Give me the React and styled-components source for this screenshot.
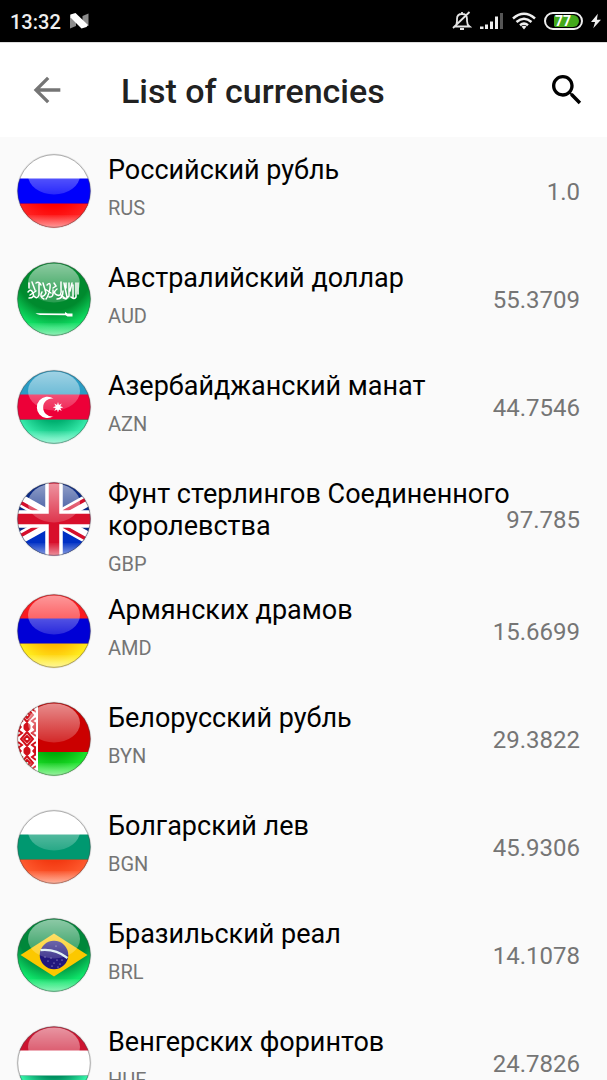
import React, { useId } from "react";
import styled, { createGlobalStyle } from "styled-components";

const GlobalStyle = createGlobalStyle`
  * { box-sizing: border-box; }
  html, body { margin: 0; background: #fafafa; }
  body, button { font-family: Roboto, "Liberation Sans", sans-serif; }
`;

const Screen = styled.div`
  display: flex;
  flex-direction: column;
  height: 100vh;
  overflow: hidden;
  background: #fafafa;
`;

const StatusBar = styled.div`
  flex: none;
  display: flex;
  align-items: center;
  justify-content: space-between;
  height: 42px;
  padding: 0 6px 0 10px;
  background: #000;
  color: #eee;
`;

const StatusGroup = styled.div`
  display: flex;
  align-items: center;
  gap: ${(p) => p.$gap}px;

  svg { display: block; flex: none; }
`;

const Clock = styled.time`
  font-size: 20px;
  line-height: 24px;
  font-weight: 500;
  padding-top: 2px;
`;

const Battery = styled.div`
  display: flex;
  width: 39px;
  height: 18px;
  padding: 1px;
  border: 2px solid #eee;
  border-radius: 9px;
`;

const BatteryLevel = styled.div`
  width: 25px;
  margin-left: auto;
  margin-right: 1px;
  border-radius: 2px 7px 7px 2px;
  background: #43a91c;
  color: #fff;
  font-size: 14px;
  line-height: 12px;
  font-weight: 700;
  padding-left: 1px;
`;

const Header = styled.header`
  flex: none;
  display: flex;
  align-items: center;
  height: 95px;
  padding: 0 20px 0 27px;
  border-top: 1px solid #ddd;
  background: #fff;
`;

const IconButton = styled.button`
  flex: none;
  width: 40px;
  height: 40px;
  padding: 0;
  border: 0;
  background: none;
  color: ${(p) => p.$color};
  cursor: pointer;

  svg { display: block; fill: currentColor; }
`;

const Title = styled.h1`
  flex: 1;
  margin: 0 16px 0 54px;
  padding-top: 2px;
  color: #212121;
  font-size: 34px;
  line-height: 40px;
  font-weight: 500;
`;

const List = styled.ul`
  flex: 1;
  min-height: 0;
  margin: 0;
  padding: 0;
  list-style: none;
  overflow-y: auto;
  scrollbar-width: none;
`;

const Row = styled.li`
  display: flex;
  align-items: center;
  min-height: 108px;
  padding: 0 27px 0 16px;
`;

const FlagImage = styled.svg`
  flex: none;
  display: block;
  width: 76px;
  height: 76px;
`;

const Info = styled.div`
  flex: 1;
  align-self: flex-start;
  min-width: 0;
  margin: 0 -8px 0 16px;
  padding-top: 17px;
`;

const Name = styled.div`
  color: #000;
  font-size: 27px;
  line-height: 32px;
`;

const Code = styled.div`
  margin-top: 10px;
  color: #757575;
  font-size: 20px;
  line-height: 25px;
`;

const Rate = styled.div`
  flex: none;
  padding-top: 2px;
  color: #757575;
  font-size: 24px;
  line-height: 28px;
`;

function Stripes({ colors }) {
  return (
    <>
      <rect width="76" height="26" fill={colors[0]} />
      <rect y="25.500" width="76" height="25.500" fill={colors[1]} />
      <rect y="50.500" width="76" height="26" fill={colors[2]} />
    </>
  );
}

const starPoints = (cx, cy, outer, inner, n) =>
  Array.from({ length: n * 2 }, (_, i) => {
    const r = i % 2 ? inner : outer;
    const a = (Math.PI * i) / n;
    return `${(cx + r * Math.sin(a)).toFixed(2)},${(cy - r * Math.cos(a)).toFixed(2)}`;
  }).join(" ");

const ornament = "M-3 -11L0 -8L3 -11M0 -7L6 0L0 7L-6 0ZM0 -3L3 0L0 3L-3 0ZM-3 11L0 8L3 11M-9 -9L-5 -6L-9 -3M-9 9L-5 6L-9 3M9 -9L5 -6L9 -3M9 9L5 6L9 3";

const art = {
  RUS: <Stripes colors={["#fff", "#0000fb", "#fe0000"]} />,
  AUD: <rect width="76" height="76" fill="#008a2e" />,
  AZN: (
    <>
      <Stripes colors={["#2a9cc4", "#ed0038", "#00b070"]} />
      <path d="M37.500 29.500A10.700 10.700 0 1 0 37.500 47.300A9 9 0 1 1 37.500 29.500Z" fill="#fff" />
      <polygon points={starPoints(42, 38.3, 5.3, 2.5, 8)} fill="#fff" />
    </>
  ),
  GBP: (
    <>
      <rect width="76" height="76" fill="#0a2a86" />
      <rect y="50" width="76" height="26" fill="#0030c4" />
      <path d="M-14 9L90 67M90 9L-14 67" stroke="#fff" strokeWidth="12" />
      <path d="M-14 11L38 40M90 7L38 36M-14 65L38 36M90 69L38 40" stroke="#d50f2c" strokeWidth="3.500" />
      <path d="M38 0V76M0 38H76" stroke="#fff" strokeWidth="17.500" />
      <path d="M38 0V76M0 38H76" stroke="#d80f2b" strokeWidth="10.500" />
    </>
  ),
  AMD: <Stripes colors={["#fb1a1e", "#0000d6", "#ffb800"]} />,
  BYN: (
    <>
      <rect width="76" height="51" fill="#cb0000" />
      <rect y="51" width="76" height="25" fill="#00ad08" />
      <rect width="22" height="76" fill="#fff" />
      <g fill="none" stroke="#d1101a" strokeWidth="2">
        {[14, 38, 62].map((y) => (
          <path key={y} d={ornament} transform={`translate(11 ${y})`} />
        ))}
      </g>
      <g fill="#d1101a">
        {[26, 50].map((y) => (
          <path key={y} d={`M11 ${y - 4}L15 ${y}L11 ${y + 4}L7 ${y}Z M2 ${y - 5}L6 ${y}L2 ${y + 5}Z M20 ${y - 5}L16 ${y}L20 ${y + 5}Z`} />
        ))}
      </g>
      <rect x="20" width="2" height="76" fill="#fff" />
    </>
  ),
  BGN: <Stripes colors={["#fff", "#009870", "#f33a12"]} />,
  BRL: <rect width="76" height="76" fill="#00873a" />,
  HUF: <Stripes colors={["#cc1430", "#fff", "#009060"]} />,
};

/* Emblems that lie over the light at the rim. */
const emblems = {
  AUD: (
    <>
      <path
        d="M13 22V27M16 21L19 29M12 31Q15 27 17 32T13 37M18 35Q21 39 23 34V23M20 22Q23 20 25 24M26 31Q23 36 28 38M27 22L30 32Q28 36 25 35M31 24Q35 20 34 27T30 38M33 36Q38 37 37 29M38 22L40 25L37 27M41 28Q36 32 41 34T45 27V21M41 38Q47 38 47 30M48 22L51 36M50 22V27M53 22V35Q50 39 47 37M56 22L54 30M57 24V37M60 22V36Q58 39 55 36M62 22V33M14 34L20 30M29 28L35 32M45 34L50 38"
        fill="none"
        stroke="#fff"
        strokeWidth="1.500"
        strokeLinecap="round"
      />
      <path d="M19.500 52.200L49 52.600V51L51.500 52.500H56.500V55.500H51.500L49.500 54.200L24 53.900Q21 53.500 19.500 52.200Z" fill="#fff" />
    </>
  ),
  BRL: (
    <>
      <path d="M4.500 38L38 16.500L71.500 38L38 59.500Z" fill="#fcc800" />
      <circle cx="38" cy="38" r="14.300" fill="#21177d" />
      <path d="M24.500 33.200Q39 31.500 51.500 41" fill="none" stroke="#d9edf3" strokeWidth="2.300" />
      <g fill="#c9c6ee">
        {[[29, 40], [32, 44], [35, 41], [38, 46], [41, 43], [44, 47], [46, 43], [36, 49], [42, 50], [40, 29]].map(([x, y]) => (
          <circle key={`${x}-${y}`} cx={x} cy={y} r="0.600" />
        ))}
      </g>
    </>
  ),
};

/* Tint of the light at the lower rim; "full" flags take it on their whole face. */
const glow = {
  RUS: { color: "#ff2424" },
  AUD: { color: "#10e868", full: true },
  AZN: { color: "#3cf0b0" },
  GBP: { color: "#1450ff", opacity: 0 },
  AMD: { color: "#fff020" },
  BYN: { color: "#20e830" },
  BGN: { color: "#ff5c30" },
  BRL: { color: "#10f070", full: true },
  HUF: { color: "#3cffb0" },
};

function Flag({ code }) {
  const id = useId().replace(/[^a-zA-Z0-9]/g, "");
  const { color, full = false, opacity = 0.9 } = glow[code];
  return (
    <FlagImage viewBox="0 0 76 76" aria-hidden="true">
      <defs>
        <clipPath id={`c${id}`}><circle cx="38" cy="38" r="36.500" /></clipPath>
        <linearGradient id={`t${id}`} x1="0" y1="0" x2="0" y2="1">
          <stop offset="0" stopColor="#fff" stopOpacity="0.550" />
          <stop offset="1" stopColor="#fff" stopOpacity="0.160" />
        </linearGradient>
        <radialGradient id={`g${id}`} gradientUnits="userSpaceOnUse" cx="38" cy={full ? 12 : 30} r={full ? 62 : 45}>
          <stop offset={full ? 0.6 : 0.5} stopColor={color} stopOpacity="0" />
          <stop offset="0.880" stopColor={color} stopOpacity={opacity} />
          <stop offset="1" stopColor={color} stopOpacity={opacity} />
        </radialGradient>
        <linearGradient id={`w${id}`} x1="0" y1="0" x2="0" y2="1">
          <stop offset="0" stopColor="#fff" stopOpacity="0.050" />
          <stop offset="1" stopColor="#fff" stopOpacity="0.600" />
        </linearGradient>
        <radialGradient id={`s${id}`}>
          <stop offset="0.940" stopColor="#000" stopOpacity="0.180" />
          <stop offset="1" stopColor="#000" stopOpacity="0" />
        </radialGradient>
      </defs>
      <circle cx="38" cy="38" r="38" fill={`url(#s${id})`} />
      <g clipPath={`url(#c${id})`}>
        {art[code]}
        <rect x={code === "BYN" ? 22 : 0} y={full ? 0 : 51} width="76" height="76" fill={`url(#g${id})`} />
        {emblems[code]}
        <rect y="62" width="76" height="14" fill={`url(#w${id})`} />
        <ellipse cx="38" cy="22" rx="26" ry="19.500" fill={`url(#t${id})`} />
      </g>
      <circle cx="38" cy="38" r="36.300" fill="none" stroke="#444" strokeOpacity="0.400" />
    </FlagImage>
  );
}

const currencies = [
  { name: "Российский рубль", code: "RUS", rate: "1.0" },
  { name: "Австралийский доллар", code: "AUD", rate: "55.3709" },
  { name: "Азербайджанский манат", code: "AZN", rate: "44.7546" },
  { name: "Фунт стерлингов Соединенного королевства", code: "GBP", rate: "97.785" },
  { name: "Армянских драмов", code: "AMD", rate: "15.6699" },
  { name: "Белорусский рубль", code: "BYN", rate: "29.3822" },
  { name: "Болгарский лев", code: "BGN", rate: "45.9306" },
  { name: "Бразильский реал", code: "BRL", rate: "14.1078" },
  { name: "Венгерских форинтов", code: "HUF", rate: "24.7826" },
];

function NougatIcon() {
  return (
    <svg width="20" height="16" viewBox="0 0 20 16" aria-hidden="true">
      <path d="M0 1.500L6 5V13L0 15.500ZM12.500 3L18.500 0.500V13L12.500 11Z" fill="#8c8c8c" />
      <path d="M0.500 1.500L5.500 0L18 12L16.500 14L11.500 15.500L0.500 4.500Z" fill="#fff" />
    </svg>
  );
}

function MutedBellIcon() {
  return (
    <svg width="20" height="20" viewBox="0 0 20 20" fill="none" stroke="#e4e4e4" strokeWidth="1.800" aria-hidden="true">
      <path d="M3 15.500Q5 13.500 5 10V8Q5 3 10 3Q15 3 15 8V10Q15 13.500 17.500 15.500ZM10 1V3M8 18H12M1 17L17.500 1" />
    </svg>
  );
}

function SignalIcon() {
  return (
    <svg width="24" height="18" viewBox="0 0 24 18" fill="#eee" aria-hidden="true">
      <path d="M0 14.500H3.500V17H0ZM5 12.500H8V17H5ZM10 9.500H13V17H10ZM15 4.500H18V17H15Z" />
      <path d="M20 1H23V17H20Z" fill="#555" />
    </svg>
  );
}

function WifiIcon() {
  return (
    <svg width="24" height="18" viewBox="0 0 24 18" fill="none" stroke="#eee" strokeWidth="2.500" aria-hidden="true">
      <path d="M1 6.500Q12 -3 23 6.500M4.500 10Q12 3.500 19.500 10M8 13.200Q12 10 16 13.200" />
      <path d="M9.500 14.500Q12 12.800 14.500 14.500L12 17.500Z" fill="#eee" stroke="none" />
    </svg>
  );
}

function BoltIcon() {
  return (
    <svg width="10" height="16" viewBox="0 0 11 16" fill="#eee" aria-hidden="true">
      <path d="M7.500 0L0 9H4.500L2.500 16L11 6.500H6.500Z" />
    </svg>
  );
}

export default function App() {
  return (
    <Screen>
      <GlobalStyle />
      <StatusBar>
        <StatusGroup $gap={9}>
          <Clock>13:32</Clock>
          <NougatIcon />
        </StatusGroup>
        <StatusGroup $gap={8}>
          <MutedBellIcon />
          <SignalIcon />
          <WifiIcon />
          <Battery><BatteryLevel>77</BatteryLevel></Battery>
          <BoltIcon />
        </StatusGroup>
      </StatusBar>
      <Header>
        <IconButton type="button" aria-label="Back" $color="#757575">
          <svg width="40" height="40" viewBox="0 0 24 24">
            <path d="M20 11H7.830l5.590-5.590L12 4l-8 8 8 8 1.410-1.410L7.830 13H20v-2z" />
          </svg>
        </IconButton>
        <Title>List of currencies</Title>
        <IconButton type="button" aria-label="Search" $color="#000">
          <svg width="40" height="40" viewBox="0 0 24 24">
            <path d="M15.500 14h-.790l-.280-.270C15.410 12.590 16 11.110 16 9.500 16 5.910 13.090 3 9.500 3S3 5.910 3 9.500 5.910 16 9.500 16c1.610 0 3.090-.590 4.230-1.570l.270.280v.790l5 4.990L20.490 19l-4.990-5zm-6 0C7.010 14 5 11.990 5 9.500S7.010 5 9.500 5 14 7.010 14 9.500 11.990 14 9.500 14z" />
          </svg>
        </IconButton>
      </Header>
      <List>
        {currencies.map((c) => (
          <Row key={c.code}>
            <Flag code={c.code} />
            <Info>
              <Name>{c.name}</Name>
              <Code>{c.code}</Code>
            </Info>
            <Rate>{c.rate}</Rate>
          </Row>
        ))}
      </List>
    </Screen>
  );
}
